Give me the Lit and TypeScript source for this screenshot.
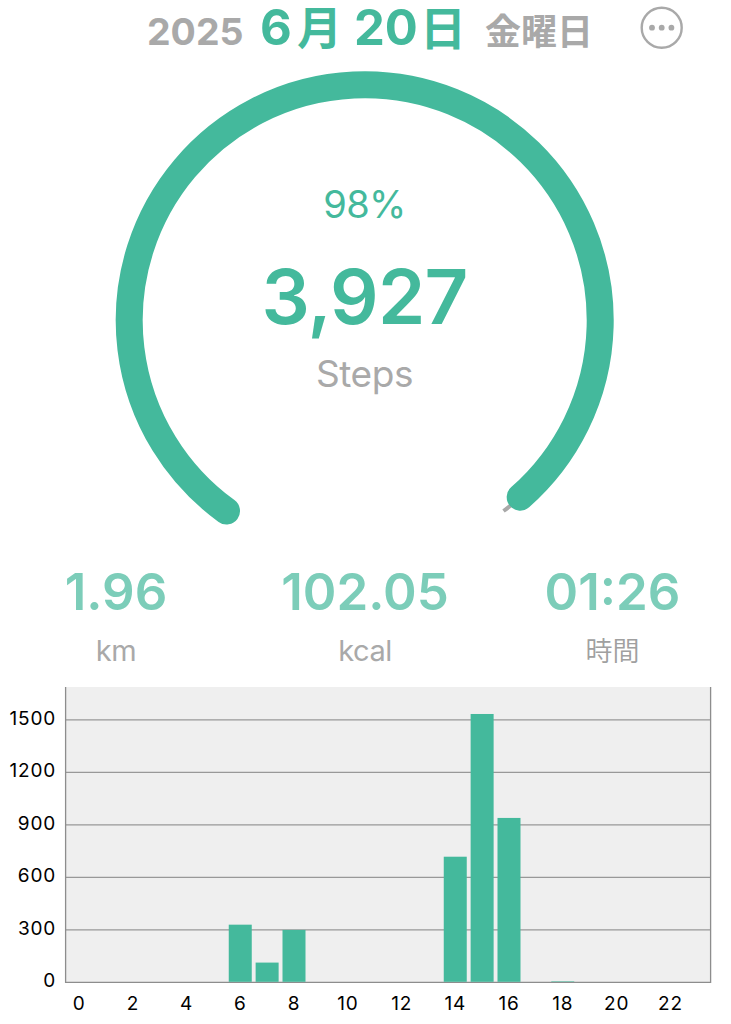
import { LitElement, html, svg, css } from "lit";
import { customElement, property } from "lit/decorators.js";

const fontStack = css`Inter, "Noto Sans CJK JP", sans-serif`;

@customElement("day-header")
class DayHeader extends LitElement {
  static styles = css`
    :host { display: block; height: 60px; font-family: ${fontStack}; }
    .bar { display: flex; height: 60px; line-height: 56px; white-space: pre; align-items: baseline; padding-left: 147px; }
    .year { font-size: 37.5px; font-weight: 700; color: #a9a9a9; width: 113px; }
    .date { display: flex; align-items: baseline; width: 225px; font-weight: 700; font-size: 49px; color: #44b99c; }
    .month { width: 37px; }
    .tsuki { width: 57px; font-size: 45px; }
    .day { width: 66px; }
    .nichi { font-size: 46px; }
    .week { font-size: 36px; font-weight: 700; color: #a9a9a9; width: 154px; }
    .more { align-self: flex-start; display: block; margin-top: 5px; }
  `;
  render() {
    return html`<div class="bar">
      <span class="year">2025</span>
      <span class="date"><span class="month">6</span><span class="tsuki">月</span><span class="day">20</span><span class="nichi">日</span></span>
      <span class="week">金曜日</span>
      <svg class="more" width="46" height="46" viewBox="0 0 46 46">
        <circle cx="22.7" cy="22.7" r="20" fill="none" stroke="#a9a9a9" stroke-width="2.4"/>
        <circle cx="13" cy="22.7" r="2.9" fill="#a9a9a9"/>
        <circle cx="22.7" cy="22.7" r="2.9" fill="#a9a9a9"/>
        <circle cx="32.4" cy="22.7" r="2.9" fill="#a9a9a9"/>
      </svg>
    </div>`;
  }
}

@customElement("step-gauge")
class StepGauge extends LitElement {
  static styles = css`
    :host { display: block; font-family: ${fontStack}; }
    .gauge { display: grid; height: 490px; }
    .ring, .texts { grid-area: 1 / 1; }
    .ring { display: block; }
    .texts { display: flex; flex-direction: column; align-items: center; padding: 119px 2px 0 0; }
    .percent { font-size: 38px; line-height: 50px; color: #44b99c; font-weight: 400; letter-spacing: -0.6px; }
    .steps { font-size: 76px; line-height: 90px; margin-top: 22px; color: #44b99c; font-weight: 600; letter-spacing: -0.8px; }
    .unit { font-size: 37px; line-height: 50px; margin-top: 8px; color: #a9a9a9; letter-spacing: -0.4px; }
  `;
  render() {
    return html`<div class="gauge">
      <svg class="ring" width="731" height="490" viewBox="0 60 731 490" fill="none">
        <path d="M226.5 511A235.5 235.5 0 1 1 503.5 511" stroke="#a9a9a9" stroke-width="4"/>
        <path d="M226.5 511A235.5 235.5 0 1 1 520.2 497.2" stroke="#44b99c" stroke-width="27" stroke-linecap="round"/>
      </svg>
      <div class="texts">
        <div class="percent">98%</div>
        <div class="steps">3,927</div>
        <div class="unit">Steps</div>
      </div>
    </div>`;
  }
}

@customElement("day-stats")
class DayStats extends LitElement {
  static styles = css`
    :host { display: block; font-family: ${fontStack}; }
    .row { display: grid; grid-template-columns: 232px 266px 229px; height: 137px; }
    .cell { display: flex; flex-direction: column; align-items: center; white-space: nowrap; }
    .value { font-size: 51px; line-height: 60px; margin-top: 12px; font-weight: 600; color: #7ccdb9; }
    .unit { font-size: 29px; line-height: 40px; margin-top: 9px; color: #a9a9a9; letter-spacing: -0.5px; }
    .jp { font-size: 27px; font-weight: 350; color: #a0a0a0; letter-spacing: 0; margin-top: 10px; }
  `;
  render() {
    return html`<div class="row">
      <div class="cell"><span class="value">1.96</span><span class="unit">km</span></div>
      <div class="cell"><span class="value">102.05</span><span class="unit">kcal</span></div>
      <div class="cell"><span class="value">01:26</span><span class="unit jp">時間</span></div>
    </div>`;
  }
}

@customElement("hour-chart")
class HourChart extends LitElement {
  @property({ attribute: false }) data: Record<number, number> = {};
  static styles = css`
    :host { display: block; font-family: ${fontStack}; font-size: 19px; letter-spacing: 0.8px; color: #000; }
    .chart { display: grid; grid-template-columns: 64px 667px; grid-template-rows: 300px 37px; }
    .y { display: flex; flex-direction: column; align-items: flex-end; padding: 5.7px 8px 0 0; }
    .y span { flex: none; height: 52.5px; line-height: 52.5px; }
    .plot { display: block; }
    .x { grid-column: 2; display: flex; padding-left: 1.5px; }
    .x span { width: 53.75px; flex: none; line-height: 33px; }
    .x i { font-style: normal; display: flex; width: 27.3px; justify-content: center; }
  `;
  render() {
    const step = 645 / 24;
    return html`<div class="chart">
      <div class="y">${[1500, 1200, 900, 600, 300, 0].map((v) => html`<span>${v}</span>`)}</div>
      <svg class="plot" width="667" height="300" viewBox="64 687 667 300">
        <rect x="65.5" y="687" width="645" height="295" fill="#efefef"/>
        ${[1, 2, 3, 4, 5].map((i) => svg`<path d="M65.5 ${982.3 - i * 52.5}H710.5" stroke="#989898" stroke-width="1.2"/>`)}
        <path d="M65.6 687V982.3H710.6V687" fill="none" stroke="#8d8d8d" stroke-width="1.3"/>
        ${Object.entries(this.data).map(([h, v]) => svg`<rect x=${65.5 + Number(h) * step + 2} y=${981.8 - v * 0.1747} width="23" height=${v * 0.1747} fill="#44b99c"/>`)}
      </svg>
      <div class="x">${Array.from({ length: 12 }, (_, i) => html`<span><i>${i * 2}</i></span>`)}</div>
    </div>`;
  }
}

@customElement("app-root")
class AppRoot extends LitElement {
  static styles = css`
    :host { display: block; width: 731px; height: 1024px; background: #fff; }
  `;
  render() {
    return html`<day-header></day-header>
      <step-gauge></step-gauge>
      <day-stats></day-stats>
      <hour-chart .data=${{ 6: 327, 7: 110, 8: 297, 14: 716, 15: 1533, 16: 938, 18: 3 }}></hour-chart>`;
  }
}
